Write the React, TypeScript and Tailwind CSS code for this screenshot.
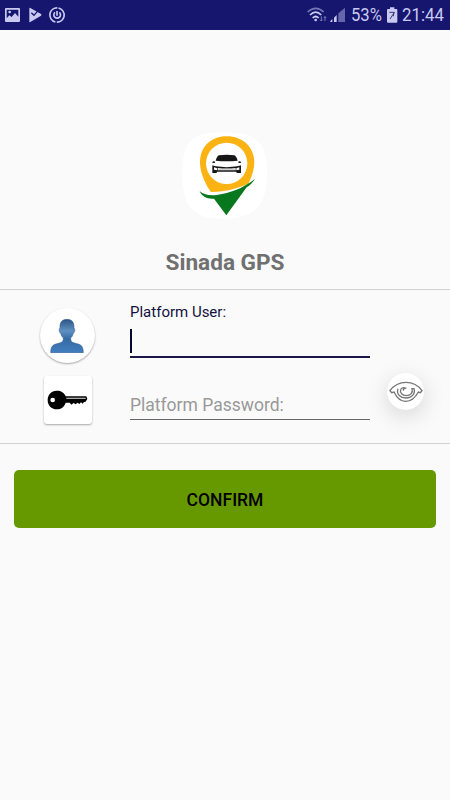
import type { ReactNode } from 'react'

function StatusBar() {
  return (
    <header className="flex h-[30px] items-center bg-[#16166f] text-[#c9c9f2]">
      <svg width="75" height="30" viewBox="0 0 225 90" fill="none">
        {/* gallery */}
        <path fillRule="evenodd" fill="currentColor" d="M18 24h39q3 0 3 3v36q0 3-3 3H18q-3 0-3-3V27q0-3 3-3Zm2 5v26l8-9 7 5 10-12 10 11V29Z" />
        <circle cx="29" cy="36" r="4" fill="currentColor" />
        {/* play store */}
        <path fill="currentColor" d="M88 25q0-3 3-1l32 18q3 2 0 5L91 66q-3 2-3-1Z" />
        <path d="m94 38 8 8 18-21" stroke="#16166f" strokeWidth="4" />
        {/* power ring */}
        <circle cx="171" cy="45" r="21.5" stroke="currentColor" strokeWidth="5" strokeDasharray="63 4.5" transform="rotate(-78 171 45)" />
        <path d="M165 37a10 10 0 1 0 13 0M171 33v14" stroke="currentColor" strokeWidth="5" />
      </svg>
      <div className="ml-auto flex items-center pr-[5px]">
        <svg width="52" height="30" viewBox="0 0 156 90" fill="none">
          {/* wifi */}
          <path d="M26 36q24-22 48 0" stroke="#7777b8" strokeWidth="5" />
          <path d="M33 45q17-17 34 0M41 54q9-9 18 0" stroke="currentColor" strokeWidth="5" />
          <circle cx="50" cy="60" r="4" fill="currentColor" />
          <path d="M67 49v14m-4-4 4 4 4-4M78 63V49m-4 5 4-4 4 4" stroke="#7777b8" strokeWidth="3" />
          {/* signal */}
          <path fill="currentColor" d="M94 66v-3l6-6v9ZM105 66V53l8-8v21Z" />
          <path fill="#6666ab" d="M118 66V40l20-17v43Z" />
        </svg>
        <span className="w-[31px] origin-left scale-x-[0.9] pt-[2px] text-[18.5px] whitespace-nowrap">53%</span>
        <svg width="20" height="30" viewBox="0 0 60 90">
          <path fill="currentColor" d="M24 22h13v5h6q3 0 3 3v35q0 3-3 3H18q-3 0-3-3V30q0-3 3-3h6Z" />
          <path d="M22 37h15L24 57M36 37l-2 12" stroke="#3c3c75" strokeWidth="3" fill="none" />
        </svg>
        <span className="w-[43px] origin-left scale-x-[0.91] pt-[2px] text-[18.5px] whitespace-nowrap">21:44</span>
      </div>
    </header>
  )
}

function Logo() {
  return (
    <svg width="100" height="100" viewBox="0 0 300 300">
      <path fill="#fff" d="M145 22c97 0 131 27 131 122s-34 137-131 137S22 239 22 144 50 22 145 22Z" />
      <path fill="#fbb314" fillRule="evenodd" d="M155 34c48 0 83 32 83 78 0 18-6 40-18 64-34 14-63 24-112 25-15-20-33-57-33-88 0-47 32-79 80-79Zm0 19a62 62 0 1 0 0 124 62 62 0 0 0 0-124Z" />
      <path fill="#08781f" d="M74 199c17 14 41 14 67 8 39-8 73-24 99-46-7 12-15 19-25 26l-61 84-37-50c-17 2-34-3-43-22Z" />
      {/* car */}
      <path fill="#161616" d="M122 107q4-14 10-16 23-4 46 0 6 2 10 16-33 3-66 0Z" />
      <path fill="#161616" d="M112 113q0-5 7-4l1 5h-7ZM198 113q0-5-7-4l-1 5h7Z" />
      <path fill="#161616" d="m112 121 10 3q33 5 66 0l10-3v23h-12l-3-4h-56l-3 4h-12Z" />
      <path fill="#fff" d="m117 127 9 3v6l-9-2ZM193 127l-9 3v6l9-2ZM128 129q27 3 54 0v7h-54Z" />
      <path d="M130 133h50" stroke="#aaa" strokeWidth="2" />
    </svg>
  )
}

function UserIcon() {
  return (
    <svg width="34" height="34" viewBox="0 0 102 102">
      <defs>
        <linearGradient id="user-fill" x1="0" y1="0" x2="0" y2="1">
          <stop offset="0" stopColor="#285586" />
          <stop offset=".35" stopColor="#6090c1" />
          <stop offset=".58" stopColor="#356ba5" />
          <stop offset="1" stopColor="#427dbd" />
        </linearGradient>
      </defs>
      <path fill="url(#user-fill)" stroke="#28568b" strokeWidth="1.5" d="M51 1c17 0 22 11 21 27 4 0 3 13-2 15-2 7-4 11-8 14 0 9 2 12 9 14l16 5c9 3 13 11 13 25H2c0-14 4-22 13-25l16-5c7-2 9-5 9-14-4-3-6-7-8-14-5-2-6-15-2-15C29 12 34 1 51 1Z" />
    </svg>
  )
}

function KeyIcon() {
  return (
    <svg width="42" height="22" viewBox="0 0 126 66">
      <path fill="#000" fillRule="evenodd" d="M29 5c13 0 23 6 27 17h62l3 8-6 9h-4l-4 5-5-4-5 5-5-4-6 5-6-4-7 5-5-6H56c-4 13-14 20-27 20C13 61 2 49 2 33S13 5 29 5ZM17 26a7 7 0 1 0 0 14 7 7 0 0 0 0-14Z" />
      <path d="M58 28h58" stroke="#aaa" strokeWidth="4" />
    </svg>
  )
}

function EyeIcon() {
  return (
    <svg width="34" height="22" viewBox="0 0 102 66" fill="none" stroke="#777" strokeWidth="4">
      <path d="M3 29C16 11 34 4 51 4s36 8 48 25l-5 6-6-2C79 50 66 61 50 61S23 50 15 33l-7 2Z" />
      <path d="M27 23c-6 17 8 28 24 28s29-12 24-28h-6c4 12-5 21-17 21s-20-9-17-19" />
      <path d="M35 25c3-4 9-6 14-4-6 2-7 4-5 8" />
    </svg>
  )
}

function Field({ children }: { children: ReactNode }) {
  return <div className="w-[240px] shrink-0">{children}</div>
}

export default function App() {
  return (
    <div className="h-[800px] w-[450px] overflow-hidden bg-[#fafafa] font-['Roboto','Noto_Sans',sans-serif]">
      <StatusBar />
      <main>
        <section className="flex h-[259px] flex-col items-center pt-[95px]">
          <Logo />
          <h1 className="mt-[22px] text-[22.6px] leading-8 font-bold text-[#707070]">Sinada GPS</h1>
        </section>

        <form className="flex h-[155px] border-y border-[#d2d2d2]">
          <div className="flex w-[130px] flex-col items-center pt-[18px]">
            <div className="ml-1 flex h-[55px] w-[55px] items-center justify-center rounded-full bg-white shadow-[0_1px_2px_#0005]">
              <UserIcon />
            </div>
            <div className="mt-[13px] ml-[5px] flex h-12 w-12 items-center justify-center rounded-[3px] bg-white shadow-[0_1px_2px_#0005]">
              <KeyIcon />
            </div>
          </div>

          <Field>
            <label htmlFor="user" className="mt-3 block text-[15px] leading-5 text-[#12123f]">Platform User:</label>
            <div className="mt-[7px] flex h-[29px] border-b-[2.5px] border-[#1c1749]">
              <span className="h-6 w-[2px] bg-[#08052e]" />
              <input id="user" className="w-full bg-transparent outline-none" />
            </div>
            <input
              type="password"
              placeholder="Platform Password:"
              className="mt-[31px] block h-[31px] w-full border-b border-[#666] bg-transparent pt-[2px] text-[17.5px] outline-none placeholder:text-[#999]"
            />
          </Field>

          <div className="pt-[83px] pl-[17px]">
            <button type="button" className="flex h-[37px] w-[37px] items-center justify-center rounded-full bg-white shadow-[0_6px_22px_#00000026]">
              <EyeIcon />
            </button>
          </div>
        </form>

        <div className="px-[14px] pt-[26px]">
          <button className="h-[58px] w-full rounded-[5px] bg-[#669900] pt-[2px] text-[17.5px] font-medium text-black">CONFIRM</button>
        </div>
      </main>
    </div>
  )
}
